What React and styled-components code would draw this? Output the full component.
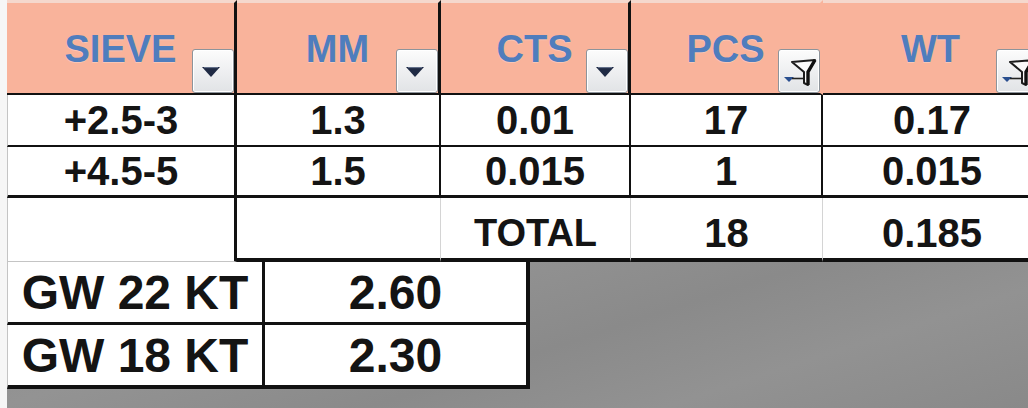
import React from 'react';
import styled, { createGlobalStyle } from 'styled-components';

const GlobalStyle = createGlobalStyle`
  html, body {
    margin: 0;
    padding: 0;
    background: #f6f6f6;
    overflow: hidden;
  }
  body {
    font-family: "Liberation Sans", Arial, sans-serif;
  }
`;

const Page = styled.div`
  width: 1028px;
  height: 408px;
  padding-left: 7px;
  box-sizing: border-box;
  display: flex;
  flex-direction: column;
  overflow: hidden;
`;

const Sheet = styled.div`
  display: grid;
  grid-template-columns: 230px 204px 190px 192px 218px;
  grid-template-rows: 95px 52px 51px 64px;
  width: 1034px;
  flex-shrink: 0;
`;

const HeadCell = styled.div`
  box-sizing: border-box;
  background: #f9b39b;
  border-top: 3px solid #f5d8cd;
  border-bottom: 2px solid #111;
  border-right: 3px solid ${({ $edge }) => ($edge ? '#111' : '#f9b39b')};
  display: grid;
  & > * {
    grid-area: 1 / 1;
  }
`;

const HeadLabel = styled.span`
  place-self: center;
  padding-top: 2px;
  font-size: 38px;
  font-weight: bold;
  color: #4f7dbd;
  text-shadow: 0 1px 0 rgba(255, 255, 255, 0.25);
`;

const DropButton = styled.div`
  align-self: end;
  justify-self: end;
  width: 42px;
  height: 44px;
  box-sizing: border-box;
  border: 1px solid #8d949b;
  border-radius: 3px;
  background: linear-gradient(#fcfcfc, #e1e3e6);
  box-shadow: inset 0 0 0 1px #fff;
  display: flex;
  align-items: center;
  justify-content: center;
`;

const Cell = styled.div`
  box-sizing: border-box;
  background: #fff;
  display: flex;
  align-items: center;
  justify-content: center;
  padding-top: ${({ $shift }) => $shift || 0}px;
  font-size: ${({ $size }) => $size || 40}px;
  font-weight: bold;
  color: #141414;
  border-left: ${({ $bl }) => $bl || 'none'};
  border-right: ${({ $br }) => $br || 'none'};
  border-bottom: ${({ $bb }) => $bb || 'none'};
`;

const Lower = styled.div`
  flex: 1;
  display: flex;
  align-items: flex-start;
  background: linear-gradient(162deg, #8b8b8b 0%, #939393 30%, #8a8a8a 55%, #929292 75%, #898989 100%);
`;

const GwGrid = styled.div`
  display: grid;
  grid-template-columns: 258px 265px;
  grid-template-rows: 63px 64px;
`;

const thin = '1px solid #c4c4c4';
const thinInner = '1px solid #d4d4d4';

const Caret = () => (
  <svg width="40" height="42" viewBox="0 0 40 42">
    <path d="M9 17 L27 17 L18 27 Z" fill="#1f2a44" />
    <path d="M11 17.6 L25 17.6" stroke="#6b7892" strokeWidth="1" />
  </svg>
);

const Funnel = () => (
  <svg width="40" height="42" viewBox="0 0 40 42">
    <path d="M5 27 L15 27 L10 32 Z" fill="#2a4f8f" />
    <path d="M13 28.5 L27 28.5" stroke="#222" strokeWidth="1.6" />
    <path d="M13 12 L36 10 L29 22 L29 35 L25 33 L25 22 Z" fill="#fafafa" stroke="#1c1c1c" strokeWidth="2" strokeLinejoin="round" />
    <path d="M36 10 L29 22 L29 35" fill="none" stroke="#111" strokeWidth="3.4" />
  </svg>
);

const headers = [
  { label: 'SIEVE', icon: 'caret', edge: true },
  { label: 'MM', icon: 'caret', edge: true },
  { label: 'CTS', icon: 'caret', edge: true },
  { label: 'PCS', icon: 'funnel', edge: false },
  { label: 'WT', icon: 'funnel', edge: false },
];

const rows = [
  ['+2.5-3', '1.3', '0.01', '17', '0.17'],
  ['+4.5-5', '1.5', '0.015', '1', '0.015'],
];

const gw = [
  ['GW 22 KT', '2.60'],
  ['GW 18 KT', '2.30'],
];

export default function App() {
  return (
    <Page>
      <GlobalStyle />
      <Sheet>
        {headers.map((h) => (
          <HeadCell key={h.label} $edge={h.edge}>
            <HeadLabel>{h.label}</HeadLabel>
            <DropButton>{h.icon === 'caret' ? <Caret /> : <Funnel />}</DropButton>
          </HeadCell>
        ))}

        {rows.map((row, r) =>
          row.map((v, c) => (
            <Cell
              key={`${r}-${c}`}
              $bl={c === 0 ? thin : undefined}
              $br={c < 4 ? (c === 0 ? '3px solid #111' : '2px solid #111') : undefined}
              $bb={r === 0 ? '2px solid #111' : '3px solid #111'}
            >
              {v}
            </Cell>
          ))
        )}

        <Cell $bl={thin} $br="3px solid #111" $bb={thin} />
        <Cell $br={thinInner} $bb="4px solid #111" />
        <Cell $br={thinInner} $bb="4px solid #111" $size={38} $shift={10}>TOTAL</Cell>
        <Cell $br={thinInner} $bb="4px solid #111" $shift={10}>18</Cell>
        <Cell $bb="4px solid #111" $shift={10}>0.185</Cell>
      </Sheet>

      <Lower>
        <GwGrid>
          {gw.map((row, r) => (
            <React.Fragment key={row[0]}>
              <Cell
                $size={48}
                $bl={thin}
                $br="3px solid #111"
                $bb={r === 0 ? '3px solid #111' : '4px solid #111'}
              >
                {row[0]}
              </Cell>
              <Cell
                $size={48}
                $br="4px solid #111"
                $bb={r === 0 ? '3px solid #111' : '4px solid #111'}
              >
                {row[1]}
              </Cell>
            </React.Fragment>
          ))}
        </GwGrid>
      </Lower>
    </Page>
  );
}
